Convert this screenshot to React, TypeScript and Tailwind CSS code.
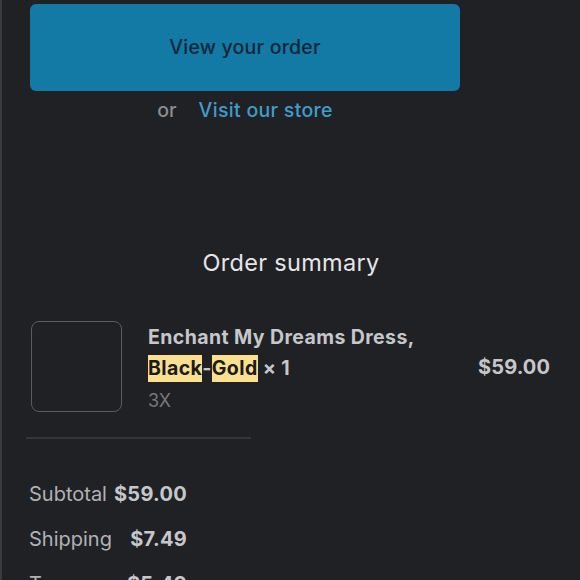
import React from "react";

const price = { fontFamily: "Inter, 'Noto Sans', sans-serif" };

export default function App() {
  return (
    <div
      className="w-[580px] h-[580px] overflow-hidden bg-[#202125] border-l-2 border-[#3a3b3f] relative"
      style={{ fontFamily: "Inter, 'Noto Sans', sans-serif" }}
    >
      <div className="pl-[28px] pt-[4px]">
        <div className="w-[430px] h-[87px] rounded-[6px] bg-[#137aa6] flex items-center justify-center text-[19.5px] font-medium text-[#0e2736] tracking-[0.2px]">
          View your order
        </div>
        <div className="w-[430px] flex justify-center items-center gap-[22px] mt-[5px] text-[19.5px] font-medium">
          <span className="text-[#8c8d90]">or</span>
          <span className="text-[#3f9ccb] tracking-[0.3px]">Visit our store</span>
        </div>
      </div>

      <div className="mt-[120px] text-center text-[23.5px] text-[#e6e6e8] tracking-[0.3px]">
        Order summary
      </div>

      <div className="flex items-start pl-[29px] pr-[30px] mt-[40px]">
        <div className="w-[91px] h-[91px] rounded-[8px] border border-[#5a5b5f] shrink-0" />
        <div className="ml-[26px] flex-1 mt-[1px]">
          <div className="text-[19.5px] font-bold text-[#c6c7ca] leading-[31px] tracking-[0.4px]">
            Enchant My Dreams Dress,
            <br />
            <span className="inline-block bg-[#fce08f] text-[#1b1b1b] leading-[27px]">Black</span>
            -
            <span className="inline-block bg-[#fce08f] text-[#1b1b1b] leading-[27px]">Gold</span> × 1
          </div>
          <div className="text-[18px] text-[#77787c] leading-[28px] mt-[3px]">3X</div>
        </div>
        <div className="text-[20px] font-bold text-[#c6c7ca] mt-[31px] tracking-[0.1px]" style={price}>
          $59.00
        </div>
      </div>

      <div className="ml-[24px] w-[225px] h-[2px] bg-[#35363a] mt-[22px]" />

      <div className="ml-[27px] mt-[43px] grid grid-cols-[auto_auto] w-max gap-x-[2px] gap-y-[21px] items-center">
        <div className="text-[20px] text-[#b1b2b5] leading-[24px]">Subtotal</div>
        <div className="text-[20px] font-bold text-[#c6c7ca] text-right leading-[24px] tracking-[0.3px]" style={price}>$59.00</div>
        <div className="text-[20px] text-[#b1b2b5] leading-[24px]">Shipping</div>
        <div className="text-[20px] font-bold text-[#c6c7ca] text-right leading-[24px] tracking-[0.3px]" style={price}>$7.49</div>
        <div className="text-[20px] text-[#b1b2b5] leading-[24px]">Taxes :</div>
        <div className="text-[20px] font-bold text-[#c6c7ca] text-right leading-[24px] tracking-[0.3px]" style={price}>$5.49</div>
      </div>
    </div>
  );
}
